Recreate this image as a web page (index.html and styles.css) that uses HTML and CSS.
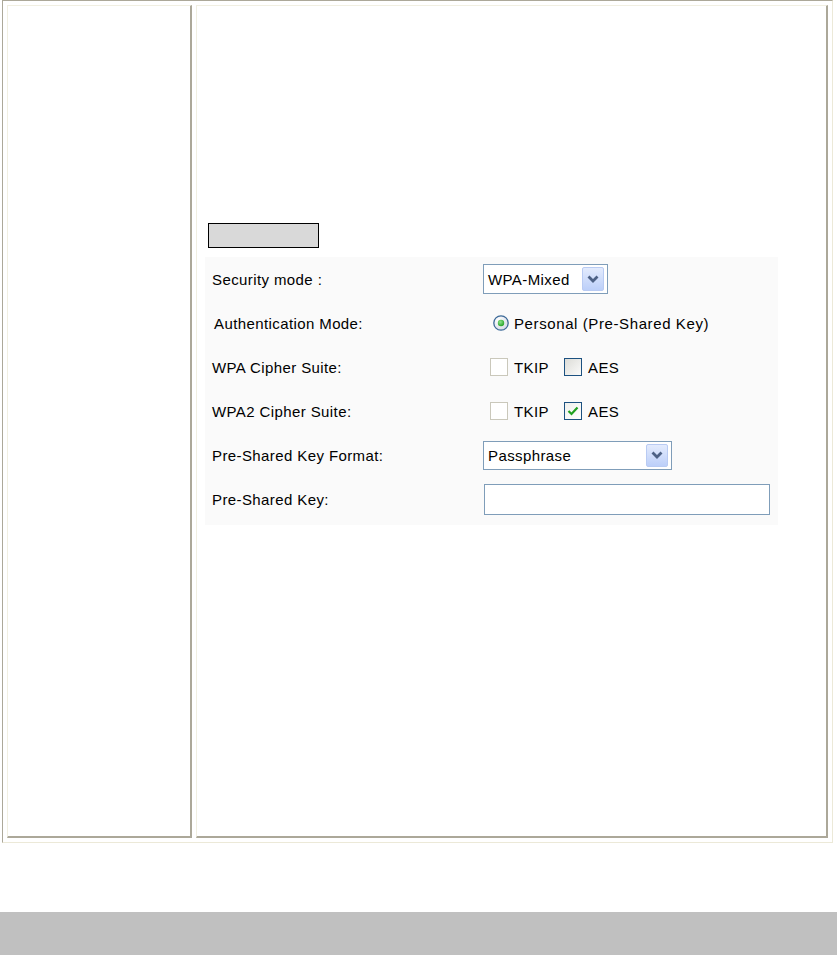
FILE: index.html
```html
<!DOCTYPE html>
<html>
<head>
<meta http-equiv="Content-Type" content="text/html; charset=UTF-8" />
<title>Wireless Security</title>
<link rel="stylesheet" href="styles.css">
</head>
<body>

<!-- frame -->
<div class="frame">
	<div class="cell side"></div>
	<div class="cell main">

		<div class="tab"></div>

		<!-- security form -->
		<div class="panel">
			<div class="row">
				<div class="label">Security mode :</div>
				<div class="field">
					<div class="select sel-mode"><span class="val">WPA-Mixed</span><span class="drop"><svg width="14" height="10" viewBox="0 0 14 10"><path d="M2.5 2.5 L7 7 L11.5 2.5" fill="none" stroke="#4d6185" stroke-width="2.8"/></svg></span></div>
				</div>
			</div>
			<div class="row">
				<div class="label label-auth">Authentication Mode:</div>
				<div class="field">
					<span class="radio"><svg width="16" height="16" viewBox="0 0 16 16"><defs><radialGradient id="rg" cx="0.35" cy="0.3" r="0.8"><stop offset="0" stop-color="#ffffff"/><stop offset="1" stop-color="#d3d9e4"/></radialGradient><radialGradient id="dot" cx="0.4" cy="0.35" r="0.7"><stop offset="0" stop-color="#8ee28e"/><stop offset="1" stop-color="#21a121"/></radialGradient></defs><circle cx="8" cy="8" r="7.2" fill="url(#rg)" stroke="#3d6a98" stroke-width="1.3"/><circle cx="8" cy="8" r="3.2" fill="url(#dot)"/></svg></span>
					<span class="opt-text opt-wide">Personal (Pre-Shared Key)</span>
				</div>
			</div>
			<div class="row">
				<div class="label">WPA Cipher Suite:</div>
				<div class="field">
					<span class="opt"><span class="check disabled"></span><span class="opt-text">TKIP</span></span>
					<span class="opt"><span class="check"></span><span class="opt-text">AES</span></span>
				</div>
			</div>
			<div class="row">
				<div class="label">WPA2 Cipher Suite:</div>
				<div class="field">
					<span class="opt"><span class="check disabled"></span><span class="opt-text">TKIP</span></span>
					<span class="opt"><span class="check on"><svg width="16" height="16" viewBox="0 0 16 16"><path d="M3.5 8 L6.5 11 L12.5 4.5" fill="none" stroke="#21a121" stroke-width="2.2"/></svg></span><span class="opt-text">AES</span></span>
				</div>
			</div>
			<div class="row">
				<div class="label">Pre-Shared Key Format:</div>
				<div class="field">
					<div class="select sel-format"><span class="val">Passphrase</span><span class="drop"><svg width="14" height="10" viewBox="0 0 14 10"><path d="M2.5 2.5 L7 7 L11.5 2.5" fill="none" stroke="#4d6185" stroke-width="2.8"/></svg></span></div>
				</div>
			</div>
			<div class="row">
				<div class="label">Pre-Shared Key:</div>
				<div class="field">
					<div class="textbox"></div>
				</div>
			</div>
		</div>
		<!-- /security form -->

	</div>
</div>
<!-- /frame -->

<div class="footer-bar"></div>

</body>
</html>
```

FILE: styles.css
```css
/* -------------------------------------
		GLOBAL
------------------------------------- */
* {
	margin: 0;
	padding: 0;
	box-sizing: border-box;
}

body {
	background: #fff;
	font-family: "Liberation Sans", Arial, sans-serif;
	font-size: 15px;
	letter-spacing: 0.4px;
	color: #000;
}

/* -------------------------------------
		FRAME
------------------------------------- */
.frame {
	margin-left: 2px;
	width: 831px;
	height: 843px;
	display: grid;
	grid-template-columns: 185px 632px;
	gap: 4px;
	padding: 4px;
	border-top: 1px solid #aca899;
	border-left: 1px solid #aca899;
	border-right: 1px solid #ece9d8;
	border-bottom: 1px solid #ece9d8;
}

.cell {
	border-top: 1px solid #f1efe2;
	border-left: 1px solid #f1efe2;
	border-right: 2px solid #aca899;
	border-bottom: 2px solid #aca899;
}

.main {
	padding: 217px 0 0 8px;
}

.tab {
	margin-left: 3px;
	width: 111px;
	height: 25px;
	border: 1px solid #000;
	background: #d9d9d9;
}

/* -------------------------------------
		FORM
------------------------------------- */
.panel {
	margin-top: 9px;
	width: 573px;
	padding: 0 0 4px 7px;
	background: #fafafa;
}

.row {
	height: 44px;
	display: flex;
	align-items: center;
}

.label {
	width: 271px;
}

.label-auth {
	padding-left: 2px;
}

.field {
	display: flex;
	align-items: center;
}

.select {
	position: relative;
	height: 30px;
	border: 1px solid #7f9db9;
	background: #fff;
	display: flex;
	align-items: center;
	padding-left: 4px;
}

.sel-mode {
	width: 125px;
}

.sel-format {
	width: 189px;
	height: 29px;
}

.drop {
	position: absolute;
	right: 3px;
	top: 2px;
	bottom: 2px;
	width: 22px;
	border: 1px solid #b9cbf3;
	border-radius: 2px;
	background: linear-gradient(#e3ebfd, #bccff9);
	display: flex;
	align-items: center;
	justify-content: center;
}

.radio {
	margin-left: 10px;
	width: 16px;
	height: 16px;
	display: flex;
}

.radio + .opt-text {
	margin-left: 5px;
}

.opt-wide {
	letter-spacing: 0.6px;
}

.opt {
	display: flex;
	align-items: center;
}

.opt:first-child {
	margin-left: 7px;
	width: 74px;
}

.check {
	width: 18px;
	height: 18px;
	border: 1px solid #1c5180;
	background: linear-gradient(135deg, #dcdcd7, #fbfbfa);
	margin-right: 6px;
	display: flex;
	align-items: center;
	justify-content: center;
}

.check.disabled {
	border-color: #cac8bb;
	background: #fff;
}

.check.on {
	background: linear-gradient(135deg, #f0f0ec, #fff);
}

.textbox {
	margin-left: 1px;
	width: 286px;
	height: 31px;
	border: 1px solid #7f9db9;
	background: #fff;
}

/* -------------------------------------
		FOOTER
------------------------------------- */
.footer-bar {
	margin-top: 69px;
	height: 43px;
	background: #c0c0c0;
}
```
